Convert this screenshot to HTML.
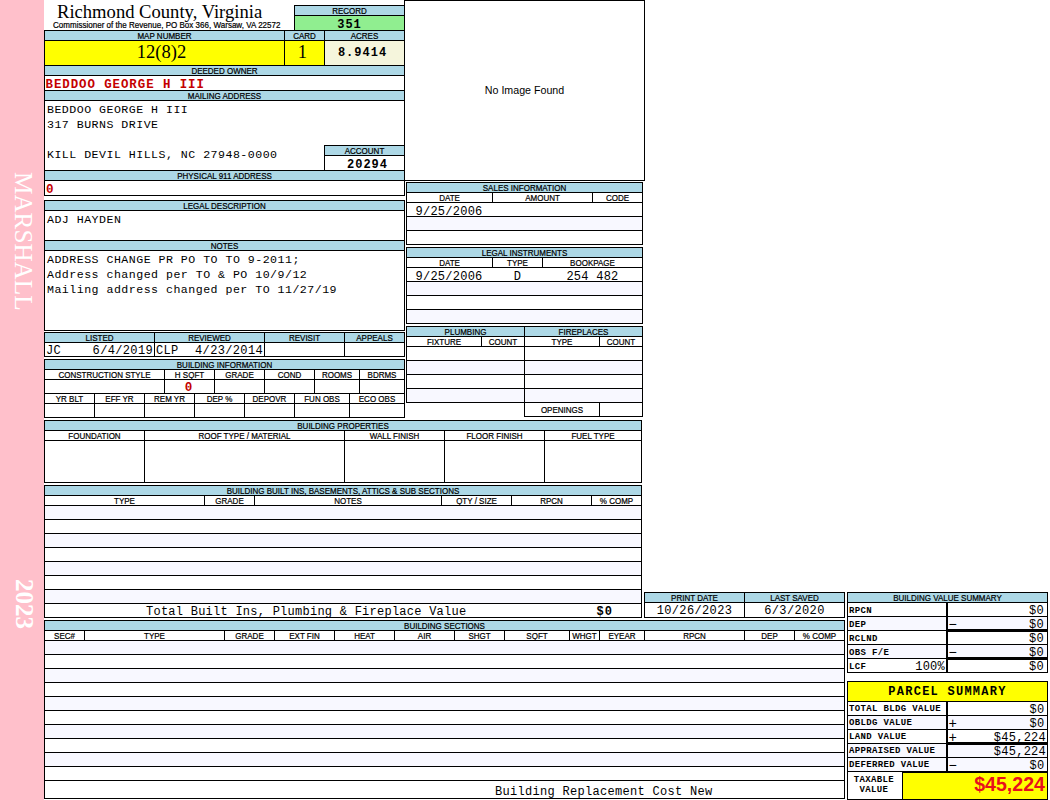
<!DOCTYPE html>
<html lang="en"><head><meta charset="utf-8"><title>Richmond County, Virginia - Property Record Card</title>
<style>
html,body{margin:0;padding:0;background:#fff;}
body{width:1050px;height:800px;position:relative;overflow:hidden;font-family:"Liberation Sans",sans-serif;color:#000;}
.a{position:absolute;box-sizing:border-box;}
.b{border:1px solid #000;}
.k{background:#000;}
.t{white-space:pre;overflow:visible;}
.side{font:25.2px "Liberation Serif",serif;color:#fff;writing-mode:vertical-rl;line-height:26px;white-space:pre;}
.sb{font-weight:bold;font-size:25px;}
.h8{font:normal 8px "Liberation Sans",sans-serif;}
.title{font:normal 18.6px "Liberation Serif",serif;}
.sub{font:normal 8px "Liberation Sans",sans-serif;letter-spacing:0.02px;}
.big{font:normal 18.6px "Liberation Serif",serif;}
.m{font:normal 11.6px "Liberation Mono",monospace;letter-spacing:0.48px;}
.m12{font:normal 12px "Liberation Mono",monospace;letter-spacing:0.25px;}
.m12v{font:normal 12px "Liberation Mono",monospace;letter-spacing:0.25px;}
.m13{font:normal 12px "Liberation Mono",monospace;letter-spacing:0.35px;}
.m13d{font:normal 12px "Liberation Mono",monospace;letter-spacing:0.36px;}
.m13t{font:normal 12px "Liberation Mono",monospace;letter-spacing:0.25px;}
.m13u{font:normal 12px "Liberation Mono",monospace;letter-spacing:0.3px;}
.mb{font:bold 12px "Liberation Mono",monospace;letter-spacing:1.0px;}
.owner{font:bold 12.4px "Liberation Mono",monospace;letter-spacing:0.95px;color:#c40000;}
.redb{font:bold 12.6px "Liberation Mono",monospace;color:#c40000;}
.sg{font:normal 14px "Liberation Mono",monospace;}
.noimg{font:normal 10.67px "Liberation Sans",sans-serif;}
.sl{font:bold 9px "Liberation Mono",monospace;letter-spacing:0.35px;}
.ps{font:bold 12px "Liberation Mono",monospace;letter-spacing:1.25px;}
.tax{font:bold 19.6px "Liberation Sans",sans-serif;color:#e8101c;}
.h8{transform:scaleY(1.09);-webkit-text-stroke:0.2px #000;}
.sub{transform:scaleY(1.09);-webkit-text-stroke:0.2px #000;}
.tax{transform:scaleY(1.02);}
</style></head>
<body>
<div class="a" style="left:0px;top:0px;width:44px;height:800px;background:#ffc0cb"></div>
<div class="a side" style="left:10px;top:172px;">MARSHALL</div>
<div class="a side sb" style="left:11px;top:579px;">2023</div>
<div class="a t title" style="left:57px;top:0px;width:233px;line-height:23px;text-align:left">Richmond County, Virginia</div>
<div class="a t sub" style="left:53px;top:20px;width:237px;line-height:11px;text-align:left;transform-origin:50% 8px">Commissioner of the Revenue, PO Box 366, Warsaw, VA 22572</div>
<div class="a b" style="left:294px;top:5px;width:111px;height:26px;background:#fff"></div>
<div class="a" style="left:295px;top:6px;width:109px;height:9px;background:#add8e6"></div>
<div class="a t h8" style="left:295px;top:6px;width:109px;line-height:11px;text-align:center;transform-origin:50% 8px">RECORD</div>
<div class="a k" style="left:294px;top:15px;width:111px;height:1px"></div>
<div class="a" style="left:295px;top:16px;width:109px;height:14px;background:#90ee90"></div>
<div class="a t mb" style="left:295px;top:17px;width:109px;line-height:16px;text-align:center">351</div>
<div class="a b" style="left:44px;top:30px;width:361px;height:166px;background:#fff"></div>
<div class="a" style="left:45px;top:31px;width:239px;height:9px;background:#add8e6"></div>
<div class="a t h8" style="left:45px;top:31px;width:239px;line-height:11px;text-align:center;transform-origin:50% 8px">MAP NUMBER</div>
<div class="a" style="left:285px;top:31px;width:39px;height:9px;background:#add8e6"></div>
<div class="a t h8" style="left:285px;top:31px;width:39px;line-height:11px;text-align:center;transform-origin:50% 8px">CARD</div>
<div class="a" style="left:325px;top:31px;width:79px;height:9px;background:#add8e6"></div>
<div class="a t h8" style="left:325px;top:31px;width:79px;line-height:11px;text-align:center;transform-origin:50% 8px">ACRES</div>
<div class="a k" style="left:44px;top:40px;width:361px;height:1px"></div>
<div class="a" style="left:45px;top:41px;width:239px;height:24px;background:#ffff00"></div>
<div class="a" style="left:285px;top:41px;width:39px;height:24px;background:#ffff00"></div>
<div class="a" style="left:325px;top:41px;width:79px;height:24px;background:#f5f5dc"></div>
<div class="a k" style="left:284px;top:30px;width:1px;height:36px"></div>
<div class="a k" style="left:324px;top:30px;width:1px;height:36px"></div>
<div class="a t big" style="left:42px;top:40px;width:239px;line-height:23px;text-align:center">12(8)2</div>
<div class="a t big" style="left:283px;top:40px;width:39px;line-height:23px;text-align:center">1</div>
<div class="a t mb" style="left:323px;top:45px;width:79px;line-height:16px;text-align:center">8.9414</div>
<div class="a k" style="left:44px;top:65px;width:361px;height:1px"></div>
<div class="a" style="left:45px;top:66px;width:359px;height:9px;background:#add8e6"></div>
<div class="a t h8" style="left:45px;top:66px;width:359px;line-height:11px;text-align:center;transform-origin:50% 8px">DEEDED OWNER</div>
<div class="a k" style="left:44px;top:75px;width:361px;height:1px"></div>
<div class="a t owner" style="left:45.5px;top:77px;width:354.5px;line-height:16px;text-align:left">BEDDOO GEORGE H III</div>
<div class="a k" style="left:44px;top:90px;width:361px;height:1px"></div>
<div class="a" style="left:45px;top:91px;width:359px;height:9px;background:#add8e6"></div>
<div class="a t h8" style="left:45px;top:91px;width:359px;line-height:11px;text-align:center;transform-origin:50% 8px">MAILING ADDRESS</div>
<div class="a k" style="left:44px;top:100px;width:361px;height:1px"></div>
<div class="a t m" style="left:47px;top:102px;width:353px;line-height:15px;text-align:left">BEDDOO GEORGE H III</div>
<div class="a t m" style="left:47px;top:117px;width:353px;line-height:15px;text-align:left">317 BURNS DRIVE</div>
<div class="a t m" style="left:47px;top:147px;width:353px;line-height:15px;text-align:left">KILL DEVIL HILLS, NC 27948-0000</div>
<div class="a b" style="left:324px;top:145px;width:81px;height:26px;background:#fff"></div>
<div class="a" style="left:325px;top:146px;width:79px;height:9px;background:#add8e6"></div>
<div class="a t h8" style="left:325px;top:146px;width:79px;line-height:11px;text-align:center;transform-origin:50% 8px">ACCOUNT</div>
<div class="a k" style="left:324px;top:155px;width:81px;height:1px"></div>
<div class="a t mb" style="left:328px;top:157px;width:79px;line-height:16px;text-align:center">20294</div>
<div class="a k" style="left:44px;top:170px;width:361px;height:1px"></div>
<div class="a" style="left:45px;top:171px;width:359px;height:9px;background:#add8e6"></div>
<div class="a t h8" style="left:45px;top:171px;width:359px;line-height:11px;text-align:center;transform-origin:50% 8px">PHYSICAL 911 ADDRESS</div>
<div class="a k" style="left:44px;top:180px;width:361px;height:1px"></div>
<div class="a t redb" style="left:46px;top:182px;width:354px;line-height:16px;text-align:left">0</div>
<div class="a b" style="left:44px;top:200px;width:361px;height:131px;background:#fff"></div>
<div class="a" style="left:45px;top:201px;width:359px;height:9px;background:#add8e6"></div>
<div class="a t h8" style="left:45px;top:201px;width:359px;line-height:11px;text-align:center;transform-origin:50% 8px">LEGAL DESCRIPTION</div>
<div class="a k" style="left:44px;top:210px;width:361px;height:1px"></div>
<div class="a t m" style="left:47px;top:212px;width:353px;line-height:15px;text-align:left">ADJ HAYDEN</div>
<div class="a k" style="left:44px;top:240px;width:361px;height:1px"></div>
<div class="a" style="left:45px;top:241px;width:359px;height:9px;background:#add8e6"></div>
<div class="a t h8" style="left:45px;top:241px;width:359px;line-height:11px;text-align:center;transform-origin:50% 8px">NOTES</div>
<div class="a k" style="left:44px;top:250px;width:361px;height:1px"></div>
<div class="a t m" style="left:47px;top:252px;width:353px;line-height:15px;text-align:left">ADDRESS CHANGE PR PO TO TO 9-2011;</div>
<div class="a t m" style="left:47px;top:267px;width:353px;line-height:15px;text-align:left">Address changed per TO &amp; PO 10/9/12</div>
<div class="a t m" style="left:47px;top:282px;width:353px;line-height:15px;text-align:left">Mailing address changed per TO 11/27/19</div>
<div class="a b" style="left:44px;top:332px;width:361px;height:25px;background:#fff"></div>
<div class="a" style="left:45px;top:333px;width:109px;height:9px;background:#add8e6"></div>
<div class="a t h8" style="left:45px;top:333px;width:109px;line-height:11px;text-align:center;transform-origin:50% 8px">LISTED</div>
<div class="a" style="left:155px;top:333px;width:109px;height:9px;background:#add8e6"></div>
<div class="a t h8" style="left:155px;top:333px;width:109px;line-height:11px;text-align:center;transform-origin:50% 8px">REVIEWED</div>
<div class="a" style="left:265px;top:333px;width:79px;height:9px;background:#add8e6"></div>
<div class="a t h8" style="left:265px;top:333px;width:79px;line-height:11px;text-align:center;transform-origin:50% 8px">REVISIT</div>
<div class="a" style="left:345px;top:333px;width:59px;height:9px;background:#add8e6"></div>
<div class="a t h8" style="left:345px;top:333px;width:59px;line-height:11px;text-align:center;transform-origin:50% 8px">APPEALS</div>
<div class="a k" style="left:44px;top:342px;width:361px;height:1px"></div>
<div class="a k" style="left:154px;top:332px;width:1px;height:25px"></div>
<div class="a k" style="left:264px;top:332px;width:1px;height:25px"></div>
<div class="a k" style="left:344px;top:332px;width:1px;height:25px"></div>
<div class="a t m13" style="left:46px;top:343px;width:54px;line-height:16px;text-align:left">JC</div>
<div class="a t m13" style="left:80px;top:343px;width:73px;line-height:16px;text-align:right">6/4/2019</div>
<div class="a t m13" style="left:156px;top:343px;width:64px;line-height:16px;text-align:left">CLP</div>
<div class="a t m13" style="left:180px;top:343px;width:83px;line-height:16px;text-align:right">4/23/2014</div>
<div class="a b" style="left:44px;top:359px;width:361px;height:59px;background:#fff"></div>
<div class="a" style="left:45px;top:360px;width:359px;height:9px;background:#add8e6"></div>
<div class="a t h8" style="left:45px;top:360px;width:359px;line-height:11px;text-align:center;transform-origin:50% 8px">BUILDING INFORMATION</div>
<div class="a k" style="left:44px;top:369px;width:361px;height:1px"></div>
<div class="a t h8" style="left:45px;top:370px;width:119px;line-height:11px;text-align:center;transform-origin:50% 8px">CONSTRUCTION STYLE</div>
<div class="a t h8" style="left:165px;top:370px;width:49px;line-height:11px;text-align:center;transform-origin:50% 8px">H SQFT</div>
<div class="a t h8" style="left:215px;top:370px;width:49px;line-height:11px;text-align:center;transform-origin:50% 8px">GRADE</div>
<div class="a t h8" style="left:265px;top:370px;width:49px;line-height:11px;text-align:center;transform-origin:50% 8px">COND</div>
<div class="a t h8" style="left:315px;top:370px;width:44px;line-height:11px;text-align:center;transform-origin:50% 8px">ROOMS</div>
<div class="a t h8" style="left:360px;top:370px;width:44px;line-height:11px;text-align:center;transform-origin:50% 8px">BDRMS</div>
<div class="a k" style="left:164px;top:369px;width:1px;height:25px"></div>
<div class="a k" style="left:214px;top:369px;width:1px;height:25px"></div>
<div class="a k" style="left:264px;top:369px;width:1px;height:25px"></div>
<div class="a k" style="left:314px;top:369px;width:1px;height:25px"></div>
<div class="a k" style="left:359px;top:369px;width:1px;height:25px"></div>
<div class="a k" style="left:44px;top:379px;width:361px;height:1px"></div>
<div class="a t redb" style="left:164px;top:380px;width:49px;line-height:16px;text-align:center">0</div>
<div class="a k" style="left:44px;top:393px;width:361px;height:1px"></div>
<div class="a t h8" style="left:45px;top:394px;width:49px;line-height:11px;text-align:center;transform-origin:50% 8px">YR BLT</div>
<div class="a t h8" style="left:95px;top:394px;width:49px;line-height:11px;text-align:center;transform-origin:50% 8px">EFF YR</div>
<div class="a t h8" style="left:145px;top:394px;width:49px;line-height:11px;text-align:center;transform-origin:50% 8px">REM YR</div>
<div class="a t h8" style="left:195px;top:394px;width:49px;line-height:11px;text-align:center;transform-origin:50% 8px">DEP %</div>
<div class="a t h8" style="left:245px;top:394px;width:49px;line-height:11px;text-align:center;transform-origin:50% 8px">DEPOVR</div>
<div class="a t h8" style="left:295px;top:394px;width:54px;line-height:11px;text-align:center;transform-origin:50% 8px">FUN OBS</div>
<div class="a t h8" style="left:350px;top:394px;width:54px;line-height:11px;text-align:center;transform-origin:50% 8px">ECO OBS</div>
<div class="a k" style="left:94px;top:393px;width:1px;height:25px"></div>
<div class="a k" style="left:144px;top:393px;width:1px;height:25px"></div>
<div class="a k" style="left:194px;top:393px;width:1px;height:25px"></div>
<div class="a k" style="left:244px;top:393px;width:1px;height:25px"></div>
<div class="a k" style="left:294px;top:393px;width:1px;height:25px"></div>
<div class="a k" style="left:349px;top:393px;width:1px;height:25px"></div>
<div class="a k" style="left:44px;top:403px;width:361px;height:1px"></div>
<div class="a b" style="left:404px;top:0px;width:241px;height:181px;background:#fff"></div>
<div class="a t noimg" style="left:405px;top:83px;width:239px;line-height:14px;text-align:center">No Image Found</div>
<div class="a b" style="left:406px;top:182px;width:237px;height:63px;background:#fff"></div>
<div class="a" style="left:407px;top:183px;width:235px;height:9px;background:#add8e6"></div>
<div class="a t h8" style="left:407px;top:183px;width:235px;line-height:11px;text-align:center;transform-origin:50% 8px">SALES INFORMATION</div>
<div class="a k" style="left:406px;top:192px;width:237px;height:1px"></div>
<div class="a t h8" style="left:407px;top:193px;width:85px;line-height:11px;text-align:center;transform-origin:50% 8px">DATE</div>
<div class="a t h8" style="left:493px;top:193px;width:99px;line-height:11px;text-align:center;transform-origin:50% 8px">AMOUNT</div>
<div class="a t h8" style="left:593px;top:193px;width:49px;line-height:11px;text-align:center;transform-origin:50% 8px">CODE</div>
<div class="a k" style="left:492px;top:192px;width:1px;height:11px"></div>
<div class="a k" style="left:592px;top:192px;width:1px;height:11px"></div>
<div class="a k" style="left:406px;top:202px;width:237px;height:1px"></div>
<div class="a" style="left:407px;top:217px;width:235px;height:13px;background:#f8f8ff"></div>
<div class="a k" style="left:406px;top:216px;width:237px;height:1px"></div>
<div class="a k" style="left:406px;top:230px;width:237px;height:1px"></div>
<div class="a t m12" style="left:415.5px;top:204px;width:76.5px;line-height:16px;text-align:left">9/25/2006</div>
<div class="a b" style="left:406px;top:247px;width:237px;height:77px;background:#fff"></div>
<div class="a" style="left:407px;top:248px;width:235px;height:9px;background:#add8e6"></div>
<div class="a t h8" style="left:407px;top:248px;width:235px;line-height:11px;text-align:center;transform-origin:50% 8px">LEGAL INSTRUMENTS</div>
<div class="a k" style="left:406px;top:257px;width:237px;height:1px"></div>
<div class="a t h8" style="left:407px;top:258px;width:85px;line-height:11px;text-align:center;transform-origin:50% 8px">DATE</div>
<div class="a t h8" style="left:493px;top:258px;width:49px;line-height:11px;text-align:center;transform-origin:50% 8px">TYPE</div>
<div class="a t h8" style="left:543px;top:258px;width:99px;line-height:11px;text-align:center;transform-origin:50% 8px">BOOKPAGE</div>
<div class="a k" style="left:492px;top:257px;width:1px;height:11px"></div>
<div class="a k" style="left:542px;top:257px;width:1px;height:11px"></div>
<div class="a k" style="left:406px;top:267px;width:237px;height:1px"></div>
<div class="a" style="left:407px;top:282px;width:235px;height:13px;background:#f8f8ff"></div>
<div class="a" style="left:407px;top:310px;width:235px;height:13px;background:#f8f8ff"></div>
<div class="a k" style="left:406px;top:281px;width:237px;height:1px"></div>
<div class="a k" style="left:406px;top:295px;width:237px;height:1px"></div>
<div class="a k" style="left:406px;top:309px;width:237px;height:1px"></div>
<div class="a t m12" style="left:415.5px;top:269px;width:76.5px;line-height:16px;text-align:left">9/25/2006</div>
<div class="a t m12" style="left:493px;top:269px;width:49px;line-height:16px;text-align:center">D</div>
<div class="a t m12" style="left:543px;top:269px;width:99px;line-height:16px;text-align:center">254 482</div>
<div class="a b" style="left:406px;top:326px;width:237px;height:77px;background:#fff"></div>
<div class="a b" style="left:524px;top:402px;width:119px;height:15px;background:#fff"></div>
<div class="a" style="left:407px;top:327px;width:117px;height:9px;background:#add8e6"></div>
<div class="a t h8" style="left:407px;top:327px;width:117px;line-height:11px;text-align:center;transform-origin:50% 8px">PLUMBING</div>
<div class="a" style="left:525px;top:327px;width:117px;height:9px;background:#add8e6"></div>
<div class="a t h8" style="left:525px;top:327px;width:117px;line-height:11px;text-align:center;transform-origin:50% 8px">FIREPLACES</div>
<div class="a k" style="left:406px;top:336px;width:237px;height:1px"></div>
<div class="a t h8" style="left:407px;top:337px;width:74px;line-height:11px;text-align:center;transform-origin:50% 8px">FIXTURE</div>
<div class="a t h8" style="left:482px;top:337px;width:42px;line-height:11px;text-align:center;transform-origin:50% 8px">COUNT</div>
<div class="a t h8" style="left:525px;top:337px;width:74px;line-height:11px;text-align:center;transform-origin:50% 8px">TYPE</div>
<div class="a t h8" style="left:600px;top:337px;width:42px;line-height:11px;text-align:center;transform-origin:50% 8px">COUNT</div>
<div class="a k" style="left:481px;top:336px;width:1px;height:11px"></div>
<div class="a k" style="left:599px;top:336px;width:1px;height:11px"></div>
<div class="a k" style="left:524px;top:326px;width:1px;height:91px"></div>
<div class="a k" style="left:406px;top:346px;width:237px;height:1px"></div>
<div class="a" style="left:407px;top:361px;width:117px;height:13px;background:#f8f8ff"></div>
<div class="a" style="left:525px;top:361px;width:117px;height:13px;background:#f8f8ff"></div>
<div class="a" style="left:407px;top:389px;width:117px;height:13px;background:#f8f8ff"></div>
<div class="a" style="left:525px;top:389px;width:117px;height:13px;background:#f8f8ff"></div>
<div class="a k" style="left:406px;top:360px;width:237px;height:1px"></div>
<div class="a k" style="left:406px;top:374px;width:237px;height:1px"></div>
<div class="a k" style="left:406px;top:388px;width:237px;height:1px"></div>
<div class="a k" style="left:599px;top:402px;width:1px;height:15px"></div>
<div class="a t h8" style="left:525px;top:405px;width:74px;line-height:11px;text-align:center;transform-origin:50% 8px">OPENINGS</div>
<div class="a b" style="left:44px;top:420px;width:598px;height:63px;background:#fff"></div>
<div class="a" style="left:45px;top:421px;width:596px;height:9px;background:#add8e6"></div>
<div class="a t h8" style="left:45px;top:421px;width:596px;line-height:11px;text-align:center;transform-origin:50% 8px">BUILDING PROPERTIES</div>
<div class="a k" style="left:44px;top:430px;width:598px;height:1px"></div>
<div class="a t h8" style="left:45px;top:431px;width:99px;line-height:11px;text-align:center;transform-origin:50% 8px">FOUNDATION</div>
<div class="a t h8" style="left:145px;top:431px;width:199px;line-height:11px;text-align:center;transform-origin:50% 8px">ROOF TYPE / MATERIAL</div>
<div class="a t h8" style="left:345px;top:431px;width:99px;line-height:11px;text-align:center;transform-origin:50% 8px">WALL FINISH</div>
<div class="a t h8" style="left:445px;top:431px;width:99px;line-height:11px;text-align:center;transform-origin:50% 8px">FLOOR FINISH</div>
<div class="a t h8" style="left:545px;top:431px;width:96px;line-height:11px;text-align:center;transform-origin:50% 8px">FUEL TYPE</div>
<div class="a k" style="left:144px;top:430px;width:1px;height:53px"></div>
<div class="a k" style="left:344px;top:430px;width:1px;height:53px"></div>
<div class="a k" style="left:444px;top:430px;width:1px;height:53px"></div>
<div class="a k" style="left:544px;top:430px;width:1px;height:53px"></div>
<div class="a k" style="left:44px;top:440px;width:598px;height:1px"></div>
<div class="a b" style="left:44px;top:485px;width:598px;height:133px;background:#fff"></div>
<div class="a" style="left:45px;top:486px;width:596px;height:9px;background:#add8e6"></div>
<div class="a t h8" style="left:45px;top:486px;width:596px;line-height:11px;text-align:center;transform-origin:50% 8px">BUILDING BUILT INS, BASEMENTS, ATTICS &amp; SUB SECTIONS</div>
<div class="a k" style="left:44px;top:495px;width:598px;height:1px"></div>
<div class="a t h8" style="left:45px;top:496px;width:159px;line-height:11px;text-align:center;transform-origin:50% 8px">TYPE</div>
<div class="a t h8" style="left:205px;top:496px;width:49px;line-height:11px;text-align:center;transform-origin:50% 8px">GRADE</div>
<div class="a t h8" style="left:255px;top:496px;width:186px;line-height:11px;text-align:center;transform-origin:50% 8px">NOTES</div>
<div class="a t h8" style="left:442px;top:496px;width:69px;line-height:11px;text-align:center;transform-origin:50% 8px">QTY / SIZE</div>
<div class="a t h8" style="left:512px;top:496px;width:79px;line-height:11px;text-align:center;transform-origin:50% 8px">RPCN</div>
<div class="a t h8" style="left:592px;top:496px;width:49px;line-height:11px;text-align:center;transform-origin:50% 8px">% COMP</div>
<div class="a k" style="left:204px;top:495px;width:1px;height:11px"></div>
<div class="a k" style="left:254px;top:495px;width:1px;height:11px"></div>
<div class="a k" style="left:441px;top:495px;width:1px;height:11px"></div>
<div class="a k" style="left:511px;top:495px;width:1px;height:11px"></div>
<div class="a k" style="left:591px;top:495px;width:1px;height:11px"></div>
<div class="a k" style="left:44px;top:505px;width:598px;height:1px"></div>
<div class="a" style="left:45px;top:506px;width:596px;height:13px;background:#f8f8ff"></div>
<div class="a k" style="left:44px;top:505px;width:598px;height:1px"></div>
<div class="a k" style="left:44px;top:519px;width:598px;height:1px"></div>
<div class="a" style="left:45px;top:534px;width:596px;height:13px;background:#f8f8ff"></div>
<div class="a k" style="left:44px;top:533px;width:598px;height:1px"></div>
<div class="a k" style="left:44px;top:547px;width:598px;height:1px"></div>
<div class="a" style="left:45px;top:562px;width:596px;height:13px;background:#f8f8ff"></div>
<div class="a k" style="left:44px;top:561px;width:598px;height:1px"></div>
<div class="a k" style="left:44px;top:575px;width:598px;height:1px"></div>
<div class="a" style="left:45px;top:590px;width:596px;height:13px;background:#f8f8ff"></div>
<div class="a k" style="left:44px;top:589px;width:598px;height:1px"></div>
<div class="a k" style="left:44px;top:603px;width:598px;height:1px"></div>
<div class="a t m13t" style="left:146px;top:604px;width:354px;line-height:16px;text-align:left">Total Built Ins, Plumbing &amp; Fireplace Value</div>
<div class="a t mb" style="left:560px;top:604px;width:53px;line-height:16px;text-align:right">$0</div>
<div class="a b" style="left:644px;top:592px;width:201px;height:26px;background:#fff"></div>
<div class="a" style="left:645px;top:593px;width:99px;height:9px;background:#add8e6"></div>
<div class="a t h8" style="left:645px;top:593px;width:99px;line-height:11px;text-align:center;transform-origin:50% 8px">PRINT DATE</div>
<div class="a" style="left:745px;top:593px;width:99px;height:9px;background:#add8e6"></div>
<div class="a t h8" style="left:745px;top:593px;width:99px;line-height:11px;text-align:center;transform-origin:50% 8px">LAST SAVED</div>
<div class="a k" style="left:644px;top:602px;width:201px;height:1px"></div>
<div class="a k" style="left:744px;top:592px;width:1px;height:26px"></div>
<div class="a t m13d" style="left:645px;top:603px;width:99px;line-height:16px;text-align:center">10/26/2023</div>
<div class="a t m13d" style="left:745px;top:603px;width:99px;line-height:16px;text-align:center">6/3/2020</div>
<div class="a b" style="left:44px;top:620px;width:801px;height:179px;background:#fff"></div>
<div class="a" style="left:45px;top:621px;width:799px;height:9px;background:#add8e6"></div>
<div class="a t h8" style="left:45px;top:621px;width:799px;line-height:11px;text-align:center;transform-origin:50% 8px">BUILDING SECTIONS</div>
<div class="a k" style="left:44px;top:630px;width:801px;height:1px"></div>
<div class="a t h8" style="left:45px;top:631px;width:39px;line-height:11px;text-align:center;transform-origin:50% 8px">SEC#</div>
<div class="a t h8" style="left:85px;top:631px;width:139px;line-height:11px;text-align:center;transform-origin:50% 8px">TYPE</div>
<div class="a t h8" style="left:225px;top:631px;width:49px;line-height:11px;text-align:center;transform-origin:50% 8px">GRADE</div>
<div class="a t h8" style="left:275px;top:631px;width:59px;line-height:11px;text-align:center;transform-origin:50% 8px">EXT FIN</div>
<div class="a t h8" style="left:335px;top:631px;width:59px;line-height:11px;text-align:center;transform-origin:50% 8px">HEAT</div>
<div class="a t h8" style="left:395px;top:631px;width:59px;line-height:11px;text-align:center;transform-origin:50% 8px">AIR</div>
<div class="a t h8" style="left:455px;top:631px;width:49px;line-height:11px;text-align:center;transform-origin:50% 8px">SHGT</div>
<div class="a t h8" style="left:505px;top:631px;width:64px;line-height:11px;text-align:center;transform-origin:50% 8px">SQFT</div>
<div class="a t h8" style="left:570px;top:631px;width:29px;line-height:11px;text-align:center;transform-origin:50% 8px">WHGT</div>
<div class="a t h8" style="left:600px;top:631px;width:44px;line-height:11px;text-align:center;transform-origin:50% 8px">EYEAR</div>
<div class="a t h8" style="left:645px;top:631px;width:99px;line-height:11px;text-align:center;transform-origin:50% 8px">RPCN</div>
<div class="a t h8" style="left:745px;top:631px;width:49px;line-height:11px;text-align:center;transform-origin:50% 8px">DEP</div>
<div class="a t h8" style="left:795px;top:631px;width:49px;line-height:11px;text-align:center;transform-origin:50% 8px">% COMP</div>
<div class="a k" style="left:84px;top:630px;width:1px;height:11px"></div>
<div class="a k" style="left:224px;top:630px;width:1px;height:11px"></div>
<div class="a k" style="left:274px;top:630px;width:1px;height:11px"></div>
<div class="a k" style="left:334px;top:630px;width:1px;height:11px"></div>
<div class="a k" style="left:394px;top:630px;width:1px;height:11px"></div>
<div class="a k" style="left:454px;top:630px;width:1px;height:11px"></div>
<div class="a k" style="left:504px;top:630px;width:1px;height:11px"></div>
<div class="a k" style="left:569px;top:630px;width:1px;height:11px"></div>
<div class="a k" style="left:599px;top:630px;width:1px;height:11px"></div>
<div class="a k" style="left:644px;top:630px;width:1px;height:11px"></div>
<div class="a k" style="left:744px;top:630px;width:1px;height:11px"></div>
<div class="a k" style="left:794px;top:630px;width:1px;height:11px"></div>
<div class="a" style="left:45px;top:641px;width:799px;height:13px;background:#f8f8ff"></div>
<div class="a k" style="left:44px;top:640px;width:801px;height:1px"></div>
<div class="a k" style="left:44px;top:654px;width:801px;height:1px"></div>
<div class="a" style="left:45px;top:669px;width:799px;height:13px;background:#f8f8ff"></div>
<div class="a k" style="left:44px;top:668px;width:801px;height:1px"></div>
<div class="a k" style="left:44px;top:682px;width:801px;height:1px"></div>
<div class="a" style="left:45px;top:697px;width:799px;height:13px;background:#f8f8ff"></div>
<div class="a k" style="left:44px;top:696px;width:801px;height:1px"></div>
<div class="a k" style="left:44px;top:710px;width:801px;height:1px"></div>
<div class="a" style="left:45px;top:725px;width:799px;height:13px;background:#f8f8ff"></div>
<div class="a k" style="left:44px;top:724px;width:801px;height:1px"></div>
<div class="a k" style="left:44px;top:738px;width:801px;height:1px"></div>
<div class="a" style="left:45px;top:753px;width:799px;height:13px;background:#f8f8ff"></div>
<div class="a k" style="left:44px;top:752px;width:801px;height:1px"></div>
<div class="a k" style="left:44px;top:766px;width:801px;height:1px"></div>
<div class="a k" style="left:44px;top:780px;width:801px;height:1px"></div>
<div class="a t m13u" style="left:495px;top:784px;width:265px;line-height:16px;text-align:left">Building Replacement Cost New</div>
<div class="a b" style="left:847px;top:592px;width:201px;height:81px;background:#fff"></div>
<div class="a" style="left:848px;top:593px;width:199px;height:9px;background:#add8e6"></div>
<div class="a t h8" style="left:848px;top:593px;width:199px;line-height:11px;text-align:center;transform-origin:50% 8px">BUILDING VALUE SUMMARY</div>
<div class="a k" style="left:847px;top:602px;width:201px;height:1px"></div>
<div class="a k" style="left:847px;top:602px;width:201px;height:1px"></div>
<div class="a t sl" style="left:849px;top:605px;width:96px;line-height:12px;text-align:left">RPCN</div>
<div class="a t m12v" style="left:959px;top:603px;width:85px;line-height:16px;text-align:right">$0</div>
<div class="a" style="left:848px;top:617px;width:199px;height:13px;background:#f8f8ff"></div>
<div class="a k" style="left:847px;top:616px;width:201px;height:1px"></div>
<div class="a t sl" style="left:849px;top:619px;width:96px;line-height:12px;text-align:left">DEP</div>
<div class="a t sg" style="left:948.5px;top:616px;width:13.5px;line-height:18px;text-align:left">&minus;</div>
<div class="a t m12v" style="left:959px;top:617px;width:85px;line-height:16px;text-align:right">$0</div>
<div class="a k" style="left:847px;top:630px;width:201px;height:1px"></div>
<div class="a t sl" style="left:849px;top:633px;width:96px;line-height:12px;text-align:left">RCLND</div>
<div class="a t m12v" style="left:959px;top:631px;width:85px;line-height:16px;text-align:right">$0</div>
<div class="a" style="left:848px;top:645px;width:199px;height:13px;background:#f8f8ff"></div>
<div class="a k" style="left:847px;top:644px;width:201px;height:1px"></div>
<div class="a t sl" style="left:849px;top:647px;width:96px;line-height:12px;text-align:left">OBS F/E</div>
<div class="a t sg" style="left:948.5px;top:644px;width:13.5px;line-height:18px;text-align:left">&minus;</div>
<div class="a t m12v" style="left:959px;top:645px;width:85px;line-height:16px;text-align:right">$0</div>
<div class="a k" style="left:847px;top:658px;width:201px;height:1px"></div>
<div class="a t sl" style="left:849px;top:661px;width:96px;line-height:12px;text-align:left">LCF</div>
<div class="a t m12v" style="left:959px;top:659px;width:85px;line-height:16px;text-align:right">$0</div>
<div class="a t m12v" style="left:900px;top:659px;width:45px;line-height:16px;text-align:right">100%</div>
<div class="a k" style="left:946px;top:602px;width:2px;height:71px"></div>
<div class="a k" style="left:948px;top:629px;width:100px;height:3px"></div>
<div class="a k" style="left:948px;top:657px;width:100px;height:3px"></div>
<div class="a b" style="left:847px;top:681px;width:201px;height:119px;background:#fff"></div>
<div class="a" style="left:848px;top:682px;width:199px;height:19px;background:#ffff00"></div>
<div class="a t ps" style="left:848px;top:684px;width:199px;line-height:16px;text-align:center">PARCEL SUMMARY</div>
<div class="a k" style="left:847px;top:701px;width:201px;height:1px"></div>
<div class="a t sl" style="left:849px;top:703px;width:96px;line-height:12px;text-align:left">TOTAL BLDG VALUE</div>
<div class="a t m12v" style="left:958.5px;top:702px;width:86px;line-height:16px;text-align:right">$0</div>
<div class="a" style="left:848px;top:716px;width:199px;height:13px;background:#f8f8ff"></div>
<div class="a k" style="left:847px;top:715px;width:201px;height:1px"></div>
<div class="a t sl" style="left:849px;top:717px;width:96px;line-height:12px;text-align:left">OBLDG VALUE</div>
<div class="a t sg" style="left:948.5px;top:715px;width:13.5px;line-height:18px;text-align:left">+</div>
<div class="a t m12v" style="left:958.5px;top:716px;width:86px;line-height:16px;text-align:right">$0</div>
<div class="a k" style="left:847px;top:729px;width:201px;height:1px"></div>
<div class="a t sl" style="left:849px;top:731px;width:96px;line-height:12px;text-align:left">LAND VALUE</div>
<div class="a t sg" style="left:948.5px;top:729px;width:13.5px;line-height:18px;text-align:left">+</div>
<div class="a t m12v" style="left:960px;top:730px;width:86px;line-height:16px;text-align:right">$45,224</div>
<div class="a" style="left:848px;top:744px;width:199px;height:13px;background:#f8f8ff"></div>
<div class="a k" style="left:847px;top:743px;width:201px;height:1px"></div>
<div class="a t sl" style="left:849px;top:745px;width:96px;line-height:12px;text-align:left">APPRAISED VALUE</div>
<div class="a t m12v" style="left:960px;top:744px;width:86px;line-height:16px;text-align:right">$45,224</div>
<div class="a" style="left:848px;top:758px;width:199px;height:13px;background:#f8f8ff"></div>
<div class="a k" style="left:847px;top:757px;width:201px;height:1px"></div>
<div class="a t sl" style="left:849px;top:759px;width:96px;line-height:12px;text-align:left">DEFERRED VALUE</div>
<div class="a t sg" style="left:948.5px;top:757px;width:13.5px;line-height:18px;text-align:left">&minus;</div>
<div class="a t m12v" style="left:958.5px;top:758px;width:86px;line-height:16px;text-align:right">$0</div>
<div class="a k" style="left:946px;top:701px;width:2px;height:71px"></div>
<div class="a k" style="left:948px;top:742px;width:100px;height:3px"></div>
<div class="a k" style="left:847px;top:771px;width:201px;height:1px"></div>
<div class="a k" style="left:902px;top:772px;width:146px;height:1px"></div>
<div class="a" style="left:903px;top:773px;width:144px;height:26px;background:#ffff00"></div>
<div class="a k" style="left:902px;top:771px;width:1px;height:29px"></div>
<div class="a t sl" style="left:847px;top:774px;width:54px;line-height:12px;text-align:center">TAXABLE</div>
<div class="a t sl" style="left:847px;top:784px;width:54px;line-height:12px;text-align:center">VALUE</div>
<div class="a t tax" style="left:910px;top:772px;width:135px;line-height:24px;text-align:right;transform-origin:50% 19px">$45,224</div>
</body></html>
